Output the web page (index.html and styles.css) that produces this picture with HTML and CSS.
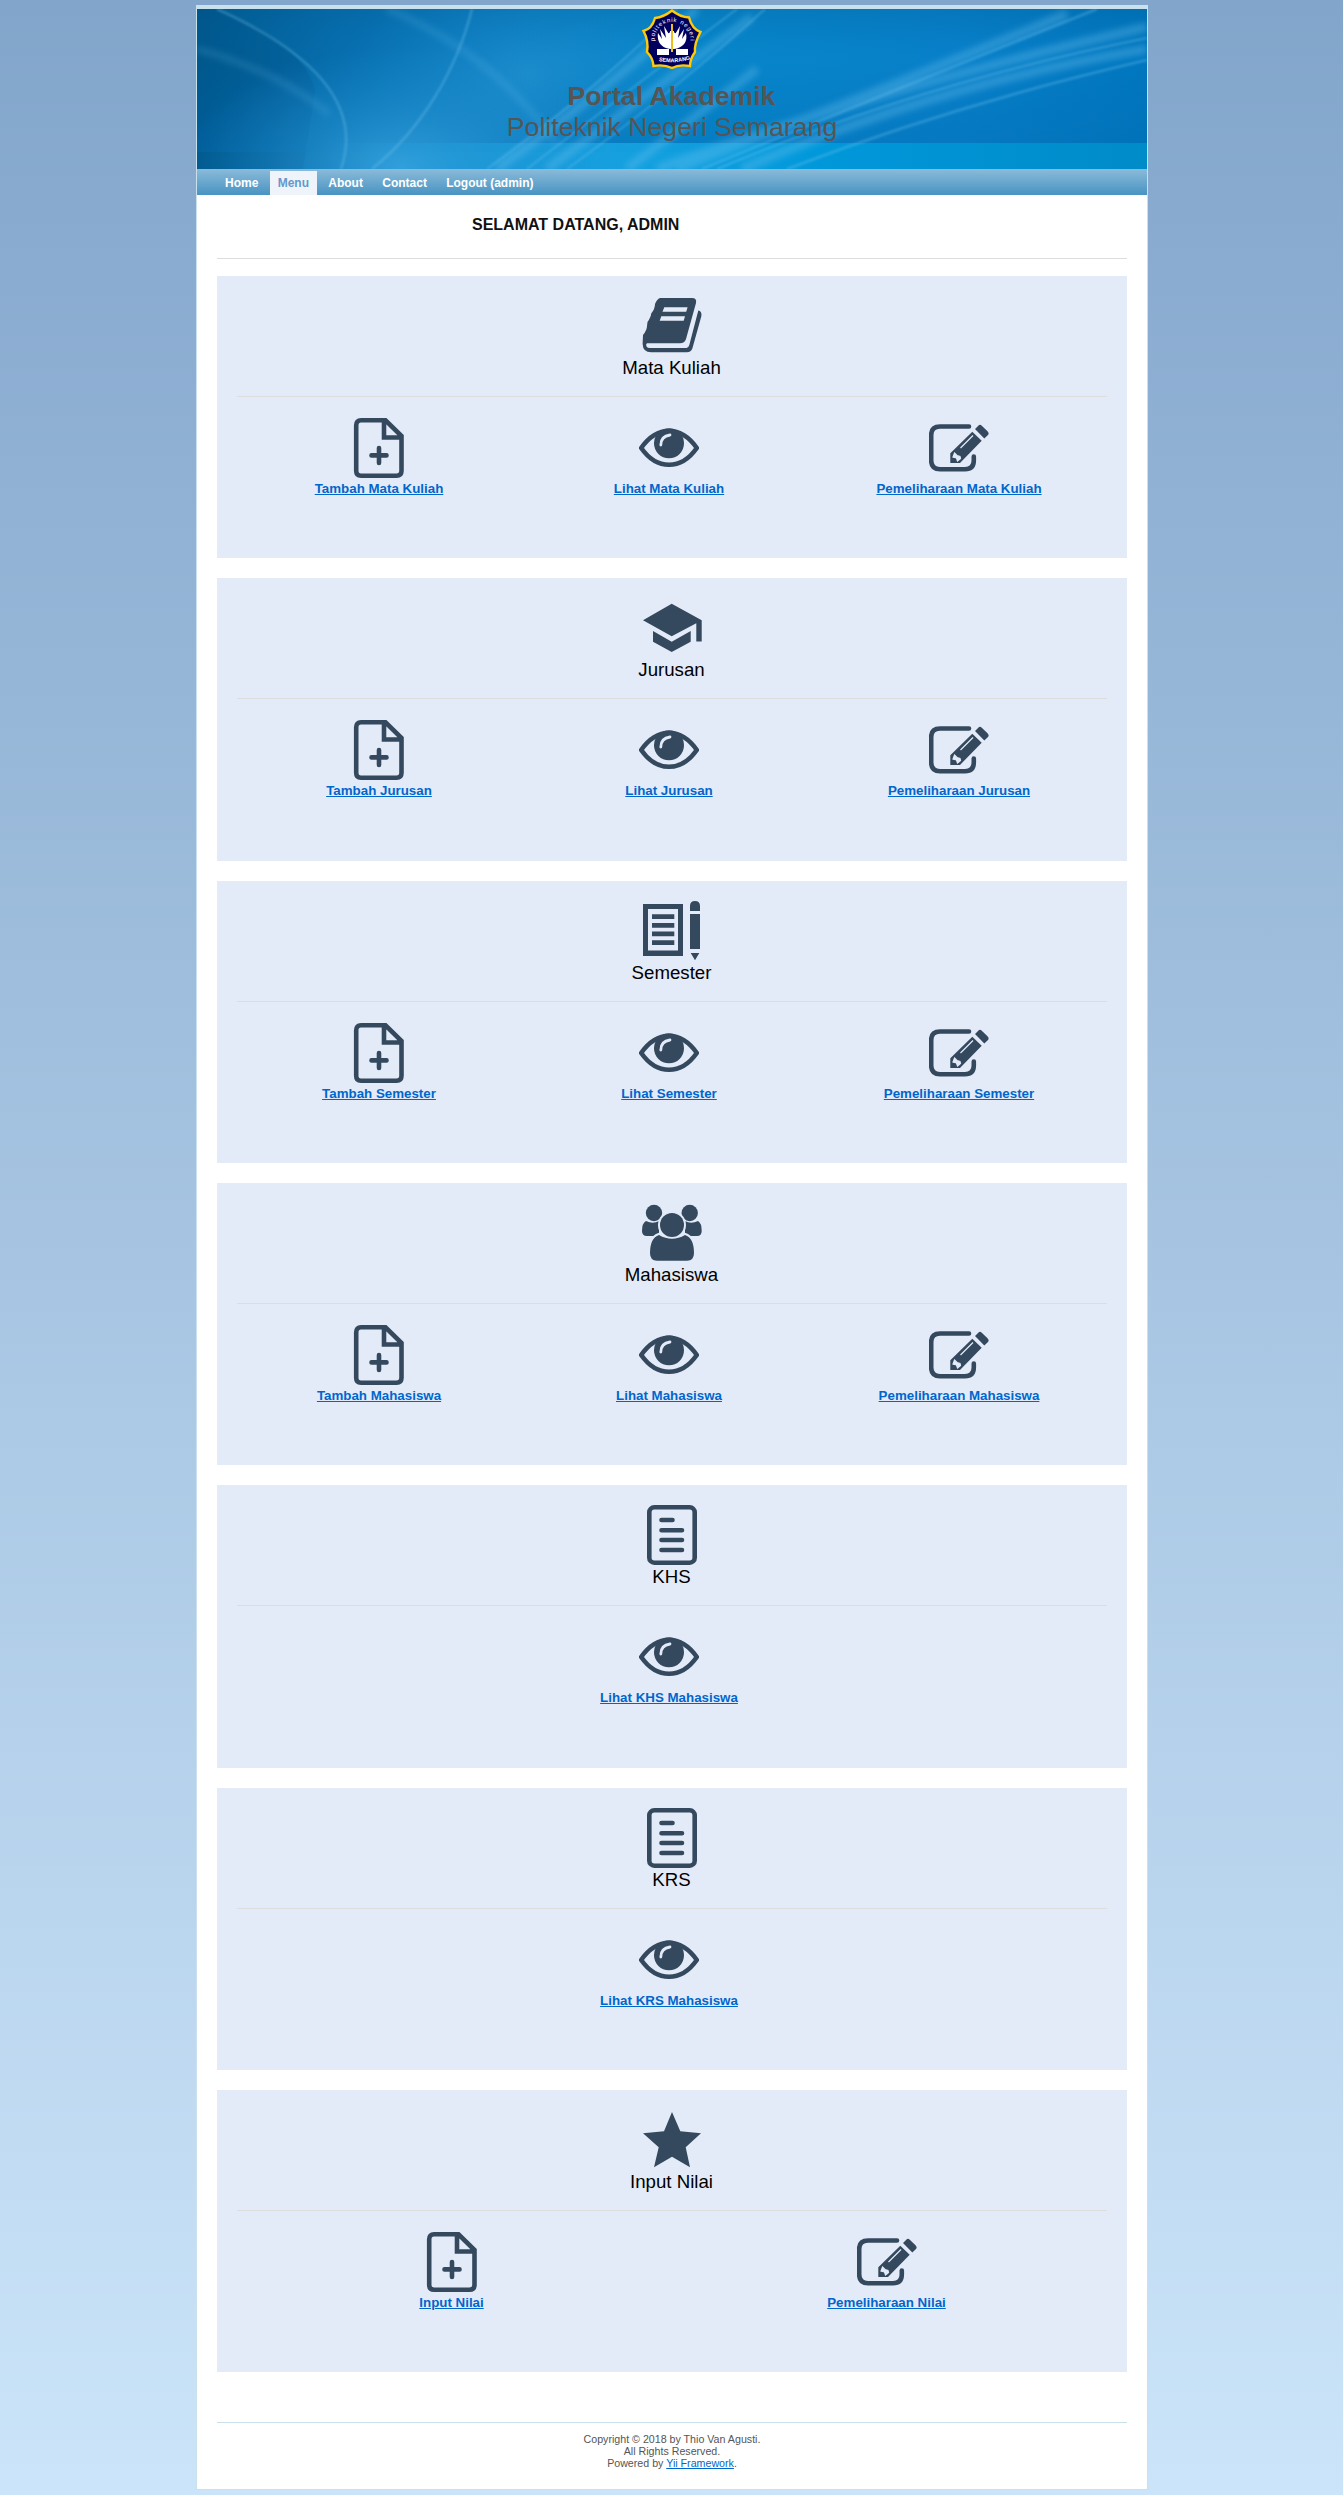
FILE: index.html
```html
<!DOCTYPE html>
<html lang="id">
<head>
<meta charset="utf-8">
<title>Portal Akademik</title>
<link rel="stylesheet" href="styles.css">
</head>
<body>
<svg class="sprite" aria-hidden="true">
  <symbol id="book" viewBox="0 0 60 60"><path fill-rule="evenodd" d="M18 2H50Q55 2 54 7L44 43Q42.5 47.3 38 47.3H5Q3.5 48 4.5 50.5Q5.5 52 8 52H44.5Q46.5 52 47.3 49L56.3 14.5Q60 15 59.4 20L50.5 52Q49 56.3 45 56.3H9Q1 56.3 .6 48L1 39Q5 34 5 30L5.500 26Q9 21 9.200 17.500Q13 13 13 8Q15 3 18 2ZM22.300 11.300L20.500 15.700H44.200L45.600 11.300ZM19.300 20.300L17.700 24.700H41.700L43 20.300Z"/></symbol>
  <symbol id="cap" viewBox="0 0 60 60"><path d="M29.700 5.700L59.700 22.300V43.500H54.300V25.300L29.700 38.300L1 22.300ZM11 33L29.700 43.700L48.700 33V43.700L29.700 54L11 43.700Z"/></symbol>
  <symbol id="note" viewBox="0 0 60 60"><path fill-rule="evenodd" d="M1 3H41V55H1ZM6 8V49.500H36V8ZM10 13.300H32.300V18H10ZM10 22H32.300V26.700H10ZM10 30.500H32.300V35.200H10ZM10 39.300H32.300V44H10ZM48 10V5Q48 0 53 0T58 5V10ZM48 13H58V48H48ZM48.700 52H57.300L53 59.300Z"/></symbol>
  <symbol id="group" viewBox="0 0 60 60"><circle cx="12" cy="10" r="8.200"/><circle cx="47.700" cy="10" r="8.200"/><path d="M4 18Q11 21.500 17 18V33H5Q0 33 0 28Q0 20 4 18ZM56 18Q49 21.500 43 18V33H55Q59.700 33 59.700 28Q59.700 20 56 18Z"/><circle class="gap" cx="30" cy="22" r="14"/><path class="halo" d="M17 32Q30 39.500 43 32Q52 35 52 50Q52 57.700 45 57.700H15Q8 57.700 8 50Q8 35 17 32Z"/><circle cx="30" cy="22" r="12"/></symbol>
  <symbol id="doc" viewBox="0 0 60 60"><rect class="line" x="7.300" y="2.300" width="45.400" height="55.400" rx="5"/><path class="line round" d="M19.500 15H30.500M19.500 25.300H40M19.500 35H40M19.500 45H40"/></symbol>
  <symbol id="file" viewBox="0 0 60 60"><path class="line" d="M12 2.300H36.500L52.500 18V52.700Q52.500 57.700 47.500 57.700H12Q7.200 57.700 7.200 52.700V7.300Q7.200 2.300 12 2.300ZM35 2V19.500H53"/><path class="line round" d="M30 30V45M22.500 37.400H37.500"/></symbol>
  <symbol id="eye" viewBox="0 0 60 60"><path class="line" d="M2.200 30Q14 13 30 13T57.800 30Q46 46.800 30 46.800T2.200 30Z"/><circle cx="30" cy="25.300" r="15"/><path class="shine" d="M21.800 27Q21.800 18.300 31 17"/></symbol>
  <symbol id="edit" viewBox="0 0 60 60"><path class="line round" d="M40 8.500H11Q2.200 8.500 2.200 17V42.500Q2.200 51.200 11 51.200H36Q44.800 51.200 44.800 42.500V38.500"/><path d="M49.500 7.500Q51 6 52.500 7.500L58.500 13.200Q60.500 15.500 59 17L55.300 20.500L46 11ZM43.300 13.700L52.700 22.700L31 45H21.300V35.300Z"/><path class="detail" d="M31.500 30L44 17.500M25.500 35L28 37.500L31 38.500L31.500 40.500L28.500 43L27.500 40L24 39Z"/></symbol>
</svg>

<div class="page">
  <header class="banner">
    <svg class="banner-art" viewBox="0 0 950 160" preserveAspectRatio="none" aria-hidden="true">
      <defs>
        <linearGradient id="base"><stop offset="0" stop-color="#005c91"/><stop offset=".15" stop-color="#076ead"/><stop offset=".3" stop-color="#0879bd"/><stop offset=".5" stop-color="#0787cb"/><stop offset=".8" stop-color="#0780c9"/><stop offset="1" stop-color="#0077bf"/></linearGradient>
        <radialGradient id="glow"><stop offset="0" stop-color="#3ba5df" stop-opacity=".85"/><stop offset="1" stop-color="#1d91d2" stop-opacity="0"/></radialGradient>
        <linearGradient id="band"><stop offset="0" stop-color="#28a5e0" stop-opacity="0"/><stop offset=".35" stop-color="#19a7e5" stop-opacity=".8"/><stop offset=".6" stop-color="#0098da"/><stop offset="1" stop-color="#008bc9"/></linearGradient>
        <linearGradient id="dusk" x2="0" y2="1"><stop offset="0" stop-color="#004f85" stop-opacity=".2"/><stop offset=".35" stop-color="#0069b0" stop-opacity="0"/><stop offset="1" stop-color="#0068b0" stop-opacity=".35"/></linearGradient>
        <filter id="soft"><feGaussianBlur stdDeviation=".8"/></filter>
        <filter id="softer"><feGaussianBlur stdDeviation="3"/></filter>
      </defs>
      <rect width="950" height="160" fill="url(#base)"/>
      <path d="M0 0H24Q110 40 118 82L106 160H0Z" fill="#004d7f" opacity=".25"/>
      <rect width="950" height="143" fill="url(#dusk)"/>
      <ellipse cx="205" cy="158" rx="220" ry="120" fill="url(#glow)"/>
      <ellipse cx="330" cy="65" rx="190" ry="110" fill="url(#glow)" opacity=".45"/>
      <rect x="130" y="134" width="820" height="26" fill="url(#band)"/>
      <g class="streaks" filter="url(#softer)">
        <path d="M0 40Q80 62 132 105M190 0Q290 40 360 134" stroke-width="7" opacity=".5"/>
        <path d="M300 160Q410 80 500 0M350 160L555 8M430 160L560 60" stroke-width="8"/>
        <path d="M480 160Q700 75 870 5M545 160Q740 75 950 40M460 160Q680 80 950 18" stroke-width="9"/>
      </g>
      <g class="streaks" filter="url(#soft)">
        <path d="M20 0Q175 70 144 160M275 0C260 60 225 120 175 160" stroke-width="2.500"/>
        <path d="M290 160Q400 80 480 0M330 160Q440 75 540 0M370 160Q480 80 568 0" stroke-width="2"/>
        <path d="M590 160Q760 95 950 51M520 160Q720 75 950 29M505 160Q700 80 900 0" stroke-width="2.500"/>
      </g>
    </svg>
    <svg class="logo" viewBox="0 0 60 60" role="img" aria-label="Politeknik Negeri Semarang">
      <defs><path id="arc" d="M13 35A18 18 0 1 1 48 35"/><path id="base-arc" d="M10 50Q30 57 52 49"/></defs>
      <path d="M30 1.500Q38 8 47 8.500Q50 20 58.500 23Q52 35 53 43Q48 50 48 57Q37 55 30 59Q22 55 11.500 57Q11 49 5 43Q7 32 1.500 22Q10 20 13 9Q22 8 30 1.500Z" fill="#01005d" stroke="#ffcb05" stroke-width="2.400"/>
      <path d="M29 40C17 39 15 30 16 24L20 30L18 20L24 29L22 17L28 27V22H32V27L38 17L36 29L42 20L40 30L44 24C46 33 41 39 32 40Z" fill="#fff"/>
      <circle cx="30" cy="29" r="6" fill="#fff"/>
      <path d="M15 40H27V46H15ZM34 40H46V46H34Z" fill="#fff"/>
      <path d="M30 15V43" stroke="#eabf22" stroke-width="2"/>
      <text class="seal"><textPath href="#arc" startOffset="3">politeknik negeri</textPath></text>
      <text class="seal small"><textPath href="#base-arc" startOffset="7">SEMARANG</textPath></text>
    </svg>
    <h1 class="brand"><strong>Portal Akademik</strong><span>Politeknik Negeri Semarang</span></h1>
  </header>
  <nav class="menu">
    <a>Home</a><a class="active">Menu</a><a>About</a><a>Contact</a><a>Logout (admin)</a>
  </nav>
  <main>
    <h2 class="welcome">SELAMAT DATANG, ADMIN</h2>
    <hr class="rule">
    <div class="cards">
      <section class="card"><svg class="icon"><use href="#book"/></svg><h3>Mata Kuliah</h3><hr>
        <div class="actions"><div><svg class="icon"><use href="#file"/></svg><a>Tambah Mata Kuliah</a></div><div><svg class="icon"><use href="#eye"/></svg><a>Lihat Mata Kuliah</a></div><div><svg class="icon"><use href="#edit"/></svg><a>Pemeliharaan Mata Kuliah</a></div></div></section>
      <section class="card"><svg class="icon"><use href="#cap"/></svg><h3>Jurusan</h3><hr>
        <div class="actions"><div><svg class="icon"><use href="#file"/></svg><a>Tambah Jurusan</a></div><div><svg class="icon"><use href="#eye"/></svg><a>Lihat Jurusan</a></div><div><svg class="icon"><use href="#edit"/></svg><a>Pemeliharaan Jurusan</a></div></div></section>
      <section class="card"><svg class="icon"><use href="#note"/></svg><h3>Semester</h3><hr>
        <div class="actions"><div><svg class="icon"><use href="#file"/></svg><a>Tambah Semester</a></div><div><svg class="icon"><use href="#eye"/></svg><a>Lihat Semester</a></div><div><svg class="icon"><use href="#edit"/></svg><a>Pemeliharaan Semester</a></div></div></section>
      <section class="card"><svg class="icon"><use href="#group"/></svg><h3>Mahasiswa</h3><hr>
        <div class="actions"><div><svg class="icon"><use href="#file"/></svg><a>Tambah Mahasiswa</a></div><div><svg class="icon"><use href="#eye"/></svg><a>Lihat Mahasiswa</a></div><div><svg class="icon"><use href="#edit"/></svg><a>Pemeliharaan Mahasiswa</a></div></div></section>
      <section class="card"><svg class="icon"><use href="#doc"/></svg><h3>KHS</h3><hr>
        <div class="actions"><div><svg class="icon"><use href="#eye"/></svg><a>Lihat KHS Mahasiswa</a></div></div></section>
      <section class="card"><svg class="icon"><use href="#doc"/></svg><h3>KRS</h3><hr>
        <div class="actions"><div><svg class="icon"><use href="#eye"/></svg><a>Lihat KRS Mahasiswa</a></div></div></section>
      <section class="card"><svg class="icon" viewBox="0 0 60 60"><path d="M30 2L38.300 21.300L59 23.300L43.700 37.300L48 57.300L30 46.700L12 57.300L16.700 37.300L1 23.300L22 21.300Z"/></svg><h3>Input Nilai</h3><hr>
        <div class="actions"><div><svg class="icon"><use href="#file"/></svg><a>Input Nilai</a></div><div><svg class="icon"><use href="#edit"/></svg><a>Pemeliharaan Nilai</a></div></div></section>
    </div>
  </main>
  <footer>Copyright © 2018 by Thio Van Agusti.<br>All Rights Reserved.<br>Powered by <a>Yii Framework</a>.</footer>
</div>
</body>
</html>
```
FILE: styles.css
```css
* { box-sizing: border-box; }
body {
  margin: 0;
  padding: 5px 0;
  min-height: 2495px;
  background: linear-gradient(#82a5cb, #cbe4f9);
  color: #000;
  font-family: "Liberation Sans", Arial, sans-serif;
  font-size: 13.333px;
}
.sprite { display: none; }
.page {
  width: 952px;
  height: 2485px;
  margin-left: 196px;
  border: 1px solid #c9e0ed;
  border-top-width: 4px;
  background: #fff;
}
.banner {
  position: relative;
  height: 160px;
  display: flex;
  flex-direction: column;
  align-items: center;
}
.banner-art { position: absolute; inset: 0; width: 100%; height: 100%; }
.streaks path { fill: none; stroke: #6fc3ee; stroke-opacity: .35; }
.logo { position: relative; width: 60px; height: 60px; overflow: visible; }
.seal { fill: #fff; font-size: 6px; letter-spacing: .9px; }
.seal.small { font-size: 5.500px; font-weight: bold; letter-spacing: 0; }
.brand {
  position: relative;
  margin: 12px 0 0;
  display: flex;
  flex-direction: column;
  align-items: center;
  color: #555;
  font-size: 26.667px;
  font-weight: normal;
  line-height: 31px;
}
.brand strong { padding-right: 1px; }
.menu {
  height: 26px;
  padding: 2px 20px 0;
  display: flex;
  gap: 3.300px;
  background: linear-gradient(#8bbbd9, #4894c2);
  color: #fff;
  font-size: 12px;
  font-weight: bold;
  line-height: 24px;
}
.menu a { padding: 0 8px; }
.menu .active { background: #eff4fa; color: #6399cd; }
main { padding: 20px 20px 0; }
.welcome {
  margin: 0 0 23px 255px;
  color: #111;
  font-size: 16px;
  line-height: 20px;
}
hr { height: 1px; margin: 0; border: 0; background: #ddd; }
.cards { display: flex; flex-direction: column; gap: 20px; padding-top: 17px; }
.card {
  height: 282.330px;
  padding: 20px;
  display: flex;
  flex-direction: column;
  align-items: center;
  background: #e4ebf8;
}
.card hr { width: 100%; }
.card h3 {
  margin: 0 0 17px;
  padding-right: 1px;
  font-size: 18.667px;
  font-weight: normal;
  line-height: 23px;
}
.icon { display: block; width: 60px; height: 60px; fill: #34495e; }
.line { fill: none; stroke: #34495e; stroke-width: 4.600px; }
.round { stroke-linecap: round; }
.gap { fill: #e4ebf8; }
.halo { stroke: #e4ebf8; stroke-width: 4px; paint-order: stroke; }
.shine { fill: none; stroke: #e4ebf8; stroke-width: 2.800px; stroke-linecap: round; }
.detail { fill: #e4ebf8; stroke: #e4ebf8; stroke-width: 1.200px; }
.actions { width: 100%; display: flex; padding-top: 21px; }
.actions div {
  flex: 1 1 0;
  padding-right: 6px;
  display: flex;
  flex-direction: column;
  align-items: center;
}
a { color: inherit; }
.actions a {
  color: #06c;
  font-weight: bold;
  line-height: 22px;
  text-decoration: underline;
}
footer {
  margin: 50px 20px 0;
  padding-top: 10px;
  border-top: 1px solid #c9e0ed;
  color: #555;
  font-size: 10.667px;
  line-height: 12px;
  text-align: center;
}
footer a { color: #06c; text-decoration: underline; }
```
